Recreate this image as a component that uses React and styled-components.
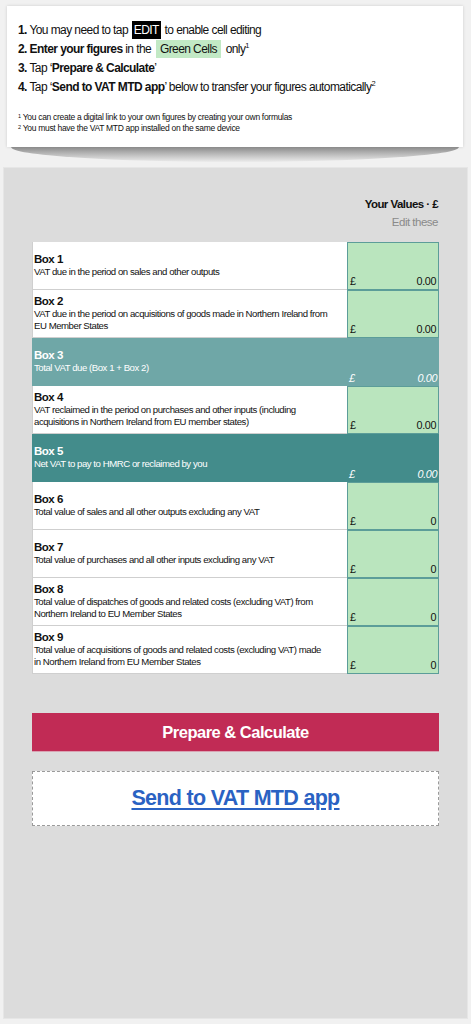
import React from "react";
import styled, { createGlobalStyle } from "styled-components";

const FONT = `"Liberation Sans", Arial, Helvetica, sans-serif`;

const Global = createGlobalStyle`
  html, body { margin: 0; padding: 0; background: #f1f1f1; }
  body { font-family: ${FONT}; color: #111; }
  * { box-sizing: border-box; }
`;

const Page = styled.div`
  display: flex;
  flex-direction: column;
  padding: 6px 0 5px;
  min-height: 1024px;
`;

const Card = styled.div`
  position: relative;
  margin: 0 8px 0 7px;
  background: #fff;
  padding: 15px 11px 13px;
  box-shadow: 0 0 3px rgba(0, 0, 0, 0.15);
  &::after {
    content: "";
    position: absolute;
    left: 4px;
    right: 4px;
    top: 100%;
    height: 15px;
    background: linear-gradient(to bottom, #8a8a8a 0%, #b8b8b8 45%, #ececec 100%);
    border-radius: 0 0 50% 50% / 0 0 100% 100%;
    clip-path: polygon(0 0, 100% 0, 99% 100%, 1% 100%);
  }
`;

const Step = styled.div`
  font-size: 12px;
  line-height: 19px;
  letter-spacing: -0.58px;
  white-space: nowrap;
  b { font-weight: 700; }
  sup { font-size: 7.5px; vertical-align: 5px; line-height: 0; letter-spacing: 0; }
`;

const EditTag = styled.span`
  background: #000;
  color: #fff;
  padding: 2px 2px;
  margin: 0 1px;
`;

const GreenTag = styled.span`
  background: #c2e9c5;
  padding: 2px 4px;
  margin: 0 2px 0 2px;
`;

const Notes = styled.div`
  margin-top: 15px;
  font-size: 8.5px;
  line-height: 11px;
  letter-spacing: -0.3px;
  white-space: nowrap;
  sup { font-size: 5.5px; vertical-align: 2px; line-height: 0; }
`;

const Panel = styled.div`
  flex: 1;
  margin: 20px 3px 0 3px;
  background: #dcdcdc;
  border: 1px solid #e6e6e6;
  padding: 28px 28px 0 28px;
  display: flex;
  flex-direction: column;
`;

const HeadTitle = styled.div`
  text-align: right;
  font-weight: 700;
  font-size: 11.5px;
  letter-spacing: -0.55px;
  line-height: 16px;
  padding-right: 1px;
`;

const HeadSub = styled.div`
  text-align: right;
  color: #8a8a8a;
  font-size: 11.5px;
  letter-spacing: -0.5px;
  line-height: 16px;
  margin-top: 2px;
  padding-right: 1px;
`;

const Table = styled.div`
  margin-top: 12px;
  display: flex;
  flex-direction: column;
`;

const Row = styled.div`
  display: grid;
  grid-template-columns: 315px 92px;
  height: 48px;
  background: ${(p) => (p.$tone === "light" ? "#6fa7a7" : p.$tone === "dark" ? "#438c8b" : "transparent")};
`;

const Label = styled.div`
  display: flex;
  flex-direction: column;
  justify-content: center;
  padding: 0 4px 2px 1px;
  background: ${(p) => (p.$total ? "transparent" : "#fff")};
  color: ${(p) => (p.$total ? "#fff" : "#111")};
  border-left: 1px solid ${(p) => (p.$total ? "transparent" : "#cfcfcf")};
  border-bottom: 1px solid ${(p) => (p.$total ? "transparent" : "#cfcfcf")};
  white-space: nowrap;
`;

const BoxTitle = styled.div`
  font-weight: 700;
  font-size: 11.5px;
  letter-spacing: -0.5px;
  line-height: 14px;
`;

const BoxDesc = styled.div`
  font-size: 9.6px;
  letter-spacing: -0.45px;
  line-height: 12px;
`;

const Value = styled.div`
  display: flex;
  align-items: flex-end;
  justify-content: space-between;
  padding: 0 2px 1px 2px;
  font-size: 10.8px;
  letter-spacing: -0.4px;
  line-height: 14px;
  background: ${(p) => (p.$total ? "transparent" : "#bae5be")};
  border: ${(p) => (p.$total ? "none" : "1.5px solid #5c9d99")};
  color: ${(p) => (p.$total ? "#fff" : "#111")};
  font-style: ${(p) => (p.$total ? "italic" : "normal")};
`;

const Actions = styled.div`
  margin-top: 39px;
  display: flex;
  flex-direction: column;
  gap: 20px;
`;

const PrepareButton = styled.button`
  height: 38px;
  border: none;
  background: #c12b55;
  color: #fff;
  font-family: ${FONT};
  font-weight: 700;
  font-size: 16.5px;
  letter-spacing: -0.5px;
  box-shadow: 0 1px 0 #d9a3b3;
`;

const SendButton = styled.div`
  height: 55px;
  background: #fff;
  border: 1px dashed #9a9a9a;
  display: flex;
  align-items: center;
  justify-content: center;
`;

const SendLink = styled.a`
  color: #2a62c3;
  font-weight: 700;
  font-size: 21.5px;
  letter-spacing: -0.7px;
  text-decoration: underline;
  text-underline-offset: 3px;
  cursor: pointer;
`;

const rows = [
  { t: "Box 1", d: ["VAT due in the period on sales and other outputs"], v: "0.00" },
  { t: "Box 2", d: ["VAT due in the period on acquisitions of goods made in Northern Ireland from", "EU Member States"], v: "0.00" },
  { t: "Box 3", d: ["Total VAT due (Box 1 + Box 2)"], v: "0.00", tone: "light" },
  { t: "Box 4", d: ["VAT reclaimed in the period on purchases and other inputs (including", "acquisitions in Northern Ireland from EU member states)"], v: "0.00" },
  { t: "Box 5", d: ["Net VAT to pay to HMRC or reclaimed by you"], v: "0.00", tone: "dark" },
  { t: "Box 6", d: ["Total value of sales and all other outputs excluding any VAT"], v: "0" },
  { t: "Box 7", d: ["Total value of purchases and all other inputs excluding any VAT"], v: "0" },
  { t: "Box 8", d: ["Total value of dispatches of goods and related costs (excluding VAT) from", "Northern Ireland to EU Member States"], v: "0" },
  { t: "Box 9", d: ["Total value of acquisitions of goods and related costs (excluding VAT) made", "in Northern Ireland from EU Member States"], v: "0" },
];

export default function App() {
  return (
    <>
      <Global />
      <Page>
        <Card>
          <Step><b>1.</b> You may need to tap <EditTag>EDIT</EditTag> to enable cell editing</Step>
          <Step><b>2. Enter your figures</b> in the <GreenTag>Green Cells</GreenTag> only<sup>1</sup></Step>
          <Step><b>3.</b> Tap ‘<b>Prepare &amp; Calculate</b>’</Step>
          <Step><b>4.</b> Tap ‘<b>Send to VAT MTD app</b>’ below to transfer your figures automatically<sup>2</sup></Step>
          <Notes>
            <div><sup>1</sup> You can create a digital link to your own figures by creating your own formulas</div>
            <div><sup>2</sup> You must have the VAT MTD app installed on the same device</div>
          </Notes>
        </Card>
        <Panel>
          <HeadTitle>Your Values · £</HeadTitle>
          <HeadSub>Edit these</HeadSub>
          <Table>
            {rows.map((r) => (
              <Row key={r.t} $tone={r.tone}>
                <Label $total={!!r.tone}>
                  <BoxTitle>{r.t}</BoxTitle>
                  {r.d.map((line) => (
                    <BoxDesc key={line}>{line}</BoxDesc>
                  ))}
                </Label>
                <Value $total={!!r.tone}>
                  <span>£</span>
                  <span>{r.v}</span>
                </Value>
              </Row>
            ))}
          </Table>
          <Actions>
            <PrepareButton>Prepare &amp; Calculate</PrepareButton>
            <SendButton>
              <SendLink>Send to VAT MTD app</SendLink>
            </SendButton>
          </Actions>
        </Panel>
      </Page>
    </>
  );
}
